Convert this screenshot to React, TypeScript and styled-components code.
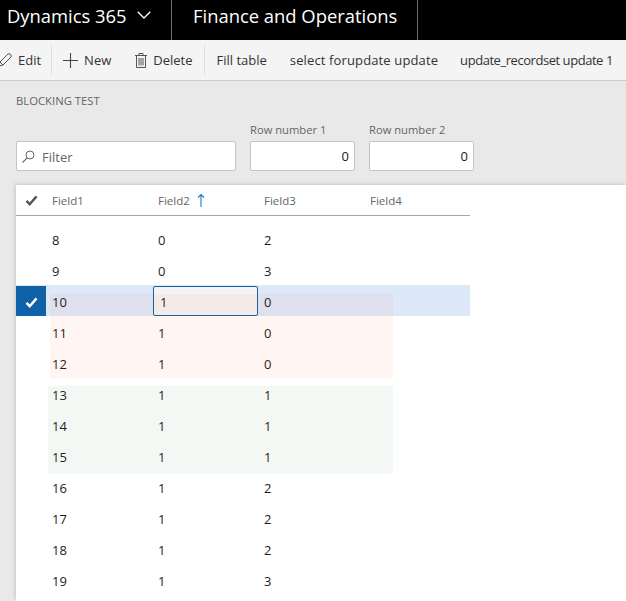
import styled, { createGlobalStyle } from 'styled-components';

const GlobalStyle = createGlobalStyle`
  html, body {
    margin: 0;
    padding: 0;
    height: 100%;
    overflow: hidden;
    background: #e9e9e9;
    font-family: "Open Sans", "Liberation Sans", sans-serif;
  }
`

const Page = styled.div`
  width: 626px;
  height: 601px;
  overflow: hidden;
  display: flex;
  flex-direction: column;
`

const NavBar = styled.header`
  height: 40px;
  flex: none;
  background: #000;
  color: #fff;
  display: flex;
  align-items: stretch;
  font-size: 18.4px;
`

const NavItem = styled.div<{ $width: number; $pad: number }>`
  width: ${p => p.$width}px;
  padding-left: ${p => p.$pad}px;
  box-sizing: border-box;
  border-right: 1px solid #6e6e6e;
  display: flex;
  align-items: center;
  gap: 10px;
  padding-bottom: 10px;
`

const Toolbar = styled.nav`
  height: 40px;
  flex: none;
  background: #f4f4f4;
  border-bottom: 1px solid #c9c9c9;
  display: flex;
  align-items: center;
  color: #333;
  font-size: 13px;
`

const Action = styled.div<{ $left: number; $right: number; $spacing?: number }>`
  display: flex;
  align-items: center;
  gap: 6px;
  padding-left: ${p => p.$left}px;
  padding-right: ${p => p.$right}px;
  letter-spacing: ${p => p.$spacing ?? 0}px;
  white-space: nowrap;
`

const Divider = styled.div`
  width: 1px;
  height: 30px;
  background: #dcdcdc;
  flex: none;
`

const Body = styled.main`
  flex: 1;
  min-height: 0;
  padding: 13px 0 0 16px;
  display: flex;
  flex-direction: column;
`

const Caption = styled.div`
  font-size: 11.3px;
  line-height: 14px;
  color: #666;
`

const FilterRow = styled.div`
  display: flex;
  align-items: flex-end;
  margin-top: 22px;
  height: 41px;
`

const Field = styled.label`
  display: flex;
  flex-direction: column;
  margin-left: 14px;
  color: #666;
  font-size: 11.2px;
  line-height: 11px;
  gap: 6px;
`

const InputBox = styled.div<{ $width: number; $numeric?: boolean }>`
  width: ${p => p.$width}px;
  height: 30px;
  box-sizing: border-box;
  background: #fff;
  border: 1px solid #c4c4c4;
  border-radius: 2px;
  display: flex;
  align-items: center;
  justify-content: ${p => (p.$numeric ? 'flex-end' : 'flex-start')};
  padding: 1px 5px 0;
  gap: 7px;
  font-size: 13px;
  color: ${p => (p.$numeric ? '#1a1a1a' : '#666')};
`

const Grid = styled.section`
  position: relative;
  flex: 1;
  margin-top: 14px;
  background: #fff;
  box-shadow: -1px -1px 4px rgba(0, 0, 0, 0.14);
  font-size: 13px;
  color: #1c1c1c;
`

const HeaderRow = styled.div`
  display: flex;
  align-items: center;
  width: 454px;
  height: 31px;
  box-sizing: border-box;
  border-bottom: 1px solid #a6a6a6;
  color: #666;
  font-size: 11.5px;
`

const CheckCell = styled.div<{ $selected?: boolean }>`
  width: 30px;
  height: 30px;
  flex: none;
  display: flex;
  align-items: center;
  justify-content: center;
  box-sizing: border-box;
  ${p => p.$selected && `
    align-self: flex-end;
    padding-top: 2px;
    background: #0f62a8;
  `}
`

const HeaderCell = styled.div`
  width: 106px;
  padding-left: 6px;
  box-sizing: border-box;
  display: flex;
  align-items: center;
  gap: 7px;
`

const Rows = styled.div`
  padding-top: 7px;
`

const Row = styled.div<{ $selected?: boolean }>`
  display: flex;
  align-items: center;
  width: 454px;
  height: 31px;
  background: ${p => (p.$selected ? '#dde9f8' : 'transparent')};
`

const Cell = styled.div`
  width: 106px;
  height: 31px;
  box-sizing: border-box;
  display: flex;
  align-items: center;
  padding: 3px 0 0 6px;
`

const ActiveCell = styled.div`
  width: 105px;
  height: 30px;
  margin-left: 1px;
  align-self: flex-end;
  box-sizing: border-box;
  display: flex;
  align-items: center;
  padding: 2px 0 0 6px;
  background: #f4f4f4;
  border: 1px solid #0f62a8;
  border-radius: 2px;
`

const Highlight = styled.div<{ $top: number; $left: number; $height: number; $color: string }>`
  position: absolute;
  top: ${p => p.$top}px;
  left: ${p => p.$left}px;
  width: ${p => 377 - p.$left}px;
  height: ${p => p.$height}px;
  background: ${p => p.$color};
  pointer-events: none;
`

const rows = [
  ['8', '0', '2'],
  ['9', '0', '3'],
  ['10', '1', '0'],
  ['11', '1', '0'],
  ['12', '1', '0'],
  ['13', '1', '1'],
  ['14', '1', '1'],
  ['15', '1', '1'],
  ['16', '1', '2'],
  ['17', '1', '2'],
  ['18', '1', '2'],
  ['19', '1', '3'],
]

const Check = ({ color }: { color: string }) => (
  <svg width="13" height="11" viewBox="0 0 14 12">
    <path d="M1.5 6.5 L5 10 L12.5 1.5" fill="none" stroke={color} strokeWidth="2.6" />
  </svg>
)

const Chevron = () => (
  <svg width="14" height="8" viewBox="0 0 14 8">
    <path d="M0.7 0.7 L7 7 L13.3 0.7" fill="none" stroke="#fff" strokeWidth="1.3" />
  </svg>
)

const Pencil = () => (
  <svg width="14" height="14" viewBox="0 0 14 14" style={{ marginLeft: -2 }}>
    <path d="M1 13 L2 9 L10 1 Q11 0.4 12 1 L13 2 Q13.6 3 13 4 L5 12 Z M2 9 L5 12" fill="none" stroke="#555" strokeWidth="1" />
  </svg>
)

const Plus = () => (
  <svg width="15" height="15" viewBox="0 0 15 15">
    <path d="M7.5 0 V15 M0 7.5 H15" fill="none" stroke="#444" strokeWidth="1.1" />
  </svg>
)

const Trash = () => (
  <svg width="12" height="15" viewBox="0 0 12 15">
    <path
      d="M0 2.5 H12 M4 2.5 V0.5 H8 V2.5 M1.5 2.5 V14.5 H10.5 V2.5 M4 5 V12.5 M6 5 V12.5 M8 5 V12.5"
      fill="none"
      stroke="#555"
      strokeWidth="1"
    />
  </svg>
)

const Search = () => (
  <svg width="13" height="13" viewBox="0 0 13 13">
    <circle cx="8" cy="5" r="4" fill="none" stroke="#666" strokeWidth="1" />
    <path d="M5.2 7.8 L0.5 12.5" fill="none" stroke="#666" strokeWidth="1.1" />
  </svg>
)

const SortUp = () => (
  <svg width="8" height="13" viewBox="0 0 8 13">
    <path d="M4 0.5 V13 M1 3.5 L4 0.5 L7 3.5" fill="none" stroke="#1e7bc8" strokeWidth="1.1" />
  </svg>
)

function App() {
  return (
    <Page>
      <GlobalStyle />
      <NavBar>
        <NavItem $width={172} $pad={7}>
          Dynamics 365 <Chevron />
        </NavItem>
        <NavItem $width={246} $pad={21}>
          Finance and Operations
        </NavItem>
      </NavBar>
      <Toolbar>
        <Action $left={0} $right={10}>
          <Pencil /> Edit
        </Action>
        <Divider />
        <Action $left={11} $right={13}>
          <Plus /> New
        </Action>
        <Action $left={11} $right={11}>
          <Trash /> Delete
        </Action>
        <Divider />
        <Action $left={12} $right={12}>
          Fill table
        </Action>
        <Action $left={11} $right={11} $spacing={0.13}>
          select forupdate update
        </Action>
        <Action $left={11} $right={0} $spacing={-0.45}>
          update_recordset update 1
        </Action>
      </Toolbar>
      <Body>
        <Caption>BLOCKING TEST</Caption>
        <FilterRow>
          <InputBox $width={220}>
            <Search /> Filter
          </InputBox>
          <Field>
            Row number 1
            <InputBox $width={105} $numeric>0</InputBox>
          </Field>
          <Field>
            Row number 2
            <InputBox $width={105} $numeric>0</InputBox>
          </Field>
        </FilterRow>
        <Grid>
          <HeaderRow>
            <CheckCell>
              <Check color="#555" />
            </CheckCell>
            <HeaderCell>Field1</HeaderCell>
            <HeaderCell>
              Field2 <SortUp />
            </HeaderCell>
            <HeaderCell>Field3</HeaderCell>
            <HeaderCell>Field4</HeaderCell>
          </HeaderRow>
          <Rows>
            {rows.map(([a, b, c]) => {
              const selected = a === '10'
              return (
                <Row key={a} $selected={selected}>
                  <CheckCell $selected={selected}>
                    {selected && <Check color="#fff" />}
                  </CheckCell>
                  <Cell>{a}</Cell>
                  {selected ? <ActiveCell>{b}</ActiveCell> : <Cell>{b}</Cell>}
                  <Cell>{c}</Cell>
                </Row>
              )
            })}
          </Rows>
          <Highlight $top={109} $left={34} $height={85} $color="rgba(255, 70, 30, 0.05)" />
          <Highlight $top={201} $left={32} $height={88} $color="rgba(60, 140, 60, 0.06)" />
        </Grid>
      </Body>
    </Page>
  )
}

export default App
